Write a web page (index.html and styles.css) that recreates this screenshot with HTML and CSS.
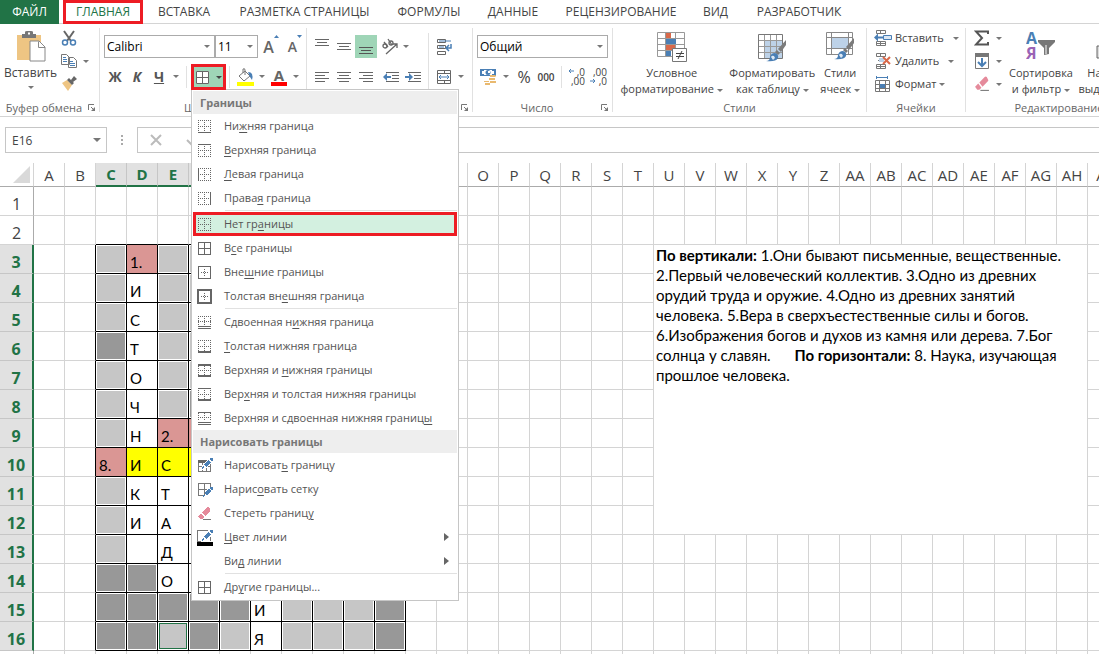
FILE: index.html
```html
<!DOCTYPE html>
<html lang="ru">
<head>
<meta charset="utf-8">
<title>Кроссворд</title>
<link rel="stylesheet" href="styles.css">
</head>
<body>
<svg class="defs" aria-hidden="true">
  <symbol id="dots" viewBox="0 0 15 15"><path d="M1 1.5h13M1 7.5h13M1 13.5h13M1.500 1v13M7.500 1v13M13.500 1v13" fill="none" stroke="#666" stroke-dasharray="1 1"/></symbol>
  <symbol id="grid4" viewBox="0 0 15 15"><path d="M1.500 1.500h12v12h-12zM7.500 1.500v12M1.500 7.500h12" fill="none" stroke="#666"/></symbol>
  <symbol id="inner" viewBox="0 0 15 15"><path d="M4 7.500h8M7.500 4v8" fill="none" stroke="#666" stroke-dasharray="1 1"/></symbol>
  <symbol id="pencil" viewBox="0 0 12 12"><path d="M0 12l1-4 2 3zM2 7l5-5 3 3-5 5zM8 1l1-1h2l1 1v2l-1 1z" fill="#4a7fb5"/></symbol>
  <symbol id="eraser" viewBox="0 0 15 15"><path d="M5 6l5-5q1-1 2 0l1 2q1 1 0 2l-5 5z" fill="#e58a9b"/><path d="M4 7l3 4-2 2H3L1 10z" fill="#e58a9b"/><path d="M6 13.500h8" stroke="#777"/></symbol>
  <symbol id="brush" viewBox="0 0 20 22"><path d="M20 0v5l-5 7-3-3z" fill="#7b7b7b"/><path d="M11 10l3 3-2 2-3-3z" fill="#7b7b7b"/><path d="M0 21q4 0 4-4 1-4 5-4 4 1 3 5-2 4-12 3z" fill="#4a7fb5"/><path d="M5 17q1-2 3-1l1 2-2 2z" fill="#dce8f4"/></symbol>
  <symbol id="launch" viewBox="0 0 8 8"><path d="M.5 6V.5H6M3 3l3 3" fill="none" stroke="#777"/><path d="M7 3v4H3z" fill="#777"/></symbol>
</svg>
<div class="app">
  <nav class="tabs">
    <button class="tab file">ФАЙЛ</button>
    <button class="tab active">ГЛАВНАЯ</button>
    <button class="tab">ВСТАВКА</button>
    <button class="tab">РАЗМЕТКА СТРАНИЦЫ</button>
    <button class="tab">ФОРМУЛЫ</button>
    <button class="tab">ДАННЫЕ</button>
    <button class="tab">РЕЦЕНЗИРОВАНИЕ</button>
    <button class="tab">ВИД</button>
    <button class="tab">РАЗРАБОТЧИК</button>
  </nav>

  <div class="ribbon">
    <section class="group clipboard">
      <div class="body">
        <button class="big paste">
          <svg width="30" height="32" viewBox="0 0 30 32"><path d="M1 4h24v25H1z" fill="#eec583"/><path d="M6 3h3V1q0-1 2-1h4q2 0 2 1v2h3v4H6z" fill="#777"/><path d="M12 1.500h2v2h-2z" fill="#fff"/><path d="M14 10h9l6 6v14H14z" fill="#fff" stroke="#888"/><path d="M22.500 10.500v6H29" fill="none" stroke="#888"/></svg>
          <span>Вставить</span><i class="caret"></i>
        </button>
        <div class="stack">
          <button class="tool" aria-label="Вырезать"><svg width="16" height="16" viewBox="0 0 16 16"><path d="M3 1l7 10M13 1L6 11" stroke="#666" stroke-width="2"/><circle cx="4" cy="12.500" r="2.500" fill="none" stroke="#4a7fb5" stroke-width="1.500"/><circle cx="12" cy="12.500" r="2.500" fill="none" stroke="#4a7fb5" stroke-width="1.500"/></svg></button>
          <button class="tool wide" aria-label="Копировать"><svg width="16" height="16" viewBox="0 0 16 16"><path d="M.5 1.500h5l3 3v7h-8zM7.500 4.500h5l3 3v7h-8z" fill="#fff" stroke="#777"/><path d="M2 4.500h3M2 6.500h4M2 8.500h4M9 8.500h3M9 10.500h5M9 12.500h5" stroke="#4a7fb5"/></svg><i class="caret"></i></button>
          <button class="tool" aria-label="Формат по образцу"><svg width="16" height="16" viewBox="0 0 16 16"><path d="M1 7l5-3 5 5-4 6z" fill="#eec583"/><path d="M6 4l2-2 5 5-2 2zM10 4l3-4 3 3-4 3z" fill="#666"/></svg></button>
        </div>
      </div>
      <footer><span>Буфер обмена</span><svg class="launch"><use href="#launch"/></svg></footer>
    </section>

    <section class="group font">
      <div class="body rows">
        <div class="row">
          <label class="combo name"><select aria-label="Шрифт"><option>Calibri</option></select></label>
          <label class="combo size"><select aria-label="Размер"><option>11</option></select></label>
          <button class="cell letter" aria-label="Увеличить размер">A<svg width="5" height="3"><path d="M0 3l2.500-3L5 3z" fill="#4a7fb5"/></svg></button>
          <button class="cell letter small" aria-label="Уменьшить размер">A<svg width="5" height="3"><path d="M0 0h5L2.500 3z" fill="#4a7fb5"/></svg></button>
        </div>
        <div class="row">
          <button class="cell style"><b>Ж</b></button>
          <button class="cell style"><b><em>К</em></b></button>
          <button class="cell style"><b><u>Ч</u></b></button>
          <button class="drop" aria-label="Подчеркивание"><i class="caret"></i></button>
          <i class="rule"></i>
          <div class="borders">
            <button class="borders-btn" aria-label="Границы"><svg width="15" height="15"><path d="M1 1h13v13H1z" fill="#fff"/><use href="#grid4"/></svg><i class="caret"></i></button>
            <div class="menu">
              <h3>Границы</h3>
              <button><svg><use href="#dots"/><path d="M1 13.500h13" stroke="#666"/></svg><span>Ни<u>ж</u>няя граница</span></button>
              <button><svg><use href="#dots"/><path d="M1 1.500h13" stroke="#666"/></svg><span><u>В</u>ерхняя граница</span></button>
              <button><svg><use href="#dots"/><path d="M1.500 1v13" stroke="#666"/></svg><span><u>Л</u>евая граница</span></button>
              <button><svg><use href="#dots"/><path d="M13.500 1v13" stroke="#666"/></svg><span>Права<u>я</u> граница</span></button>
              <hr>
              <button class="marked"><svg><use href="#dots"/></svg><span>Нет гр<u>а</u>ницы</span></button>
              <button><svg><use href="#grid4"/></svg><span>В<u>с</u>е границы</span></button>
              <button><svg><use href="#inner"/><path d="M1.500 1.500h12v12h-12z" fill="none" stroke="#666"/></svg><span>Вне<u>ш</u>ние границы</span></button>
              <button><svg><use href="#inner"/><path d="M1 1h13v13H1z" fill="none" stroke="#666" stroke-width="2"/></svg><span>Толстая вн<u>е</u>шняя граница</span></button>
              <hr>
              <button><svg><path d="M1 1.500h13M1 6.500h13M1.500 1v9M7.500 1v9M13.500 1v9" stroke="#666" stroke-dasharray="1 1"/><path d="M1 11.500h13M1 13.500h13" stroke="#666"/></svg><span>Сдвоенная н<u>и</u>жняя граница</span></button>
              <button><svg><use href="#dots"/><path d="M1 13h13" stroke="#666" stroke-width="2"/></svg><span><u>Т</u>олстая нижняя граница</span></button>
              <button><svg><use href="#dots"/><path d="M1 2h13M1 13h13" stroke="#666" stroke-width="2"/></svg><span>Верхняя и <u>н</u>ижняя границы</span></button>
              <button><svg><use href="#dots"/><path d="M1 1.500h13" stroke="#666"/><path d="M1 13h13" stroke="#666" stroke-width="2"/></svg><span>Вер<u>х</u>няя и толстая нижняя границы</span></button>
              <button><svg><path d="M1 6.500h13M1.500 2v8M7.500 2v8M13.500 2v8" stroke="#666" stroke-dasharray="1 1"/><path d="M1 1.500h13M1 11.500h13M1 13.500h13" stroke="#666"/></svg><span>Верхняя и сдвоенная нижняя границ<u>ы</u></span></button>
              <h3>Нарисовать границы</h3>
              <button><svg><path d="M1.500 2.500h12v11h-12zM5.500 3v10M9.500 3v10M2 8.500h11" fill="none" stroke="#777"/><path d="M1 2h10v3H1z" fill="#666"/><path d="M4 12l1-4 6-7h4v3l-7 7z" fill="#fff"/><use href="#pencil" x="5" y="0" width="11" height="11"/></svg><span>Нарисоват<u>ь</u> границу</span></button>
              <button><svg><path d="M8 13.500H1.500v-12h12V6M7.500 2v11M2 7.500h8" fill="none" stroke="#777"/><use href="#pencil" x="6" y="5" width="10" height="10"/></svg><span>Нарис<u>о</u>вать сетку</span></button>
              <button><svg><use href="#eraser"/></svg><span>Стереть границ<u>у</u></span></button>
              <button><svg class="tall"><path d="M11 1.500H.5v11H4M13 8v4" fill="none" stroke="#777"/><use href="#pencil" x="5" y="1" width="11" height="11"/><path d="M0 13h16v4H0z"/></svg><span><u>Ц</u>вет линии</span><i class="sub"></i></button>
              <button><svg></svg><span>Ви<u>д</u> линии</span><i class="sub"></i></button>
              <hr>
              <button><svg><use href="#grid4"/></svg><span>Др<u>у</u>гие границы...</span></button>
            </div>
          </div>
          <i class="rule"></i>
          <button class="cell" aria-label="Цвет заливки"><svg width="17" height="18" viewBox="0 0 17 18"><path d="M2 8l6-5 5 5-6 5zM6 5V1q2-1 2 1v5" fill="none" stroke="#777"/><path d="M11 4q6 0 4 8l-2-3z" fill="#4a7fb5"/><path d="M0 14h17v4H0z" fill="#ff0"/></svg></button>
          <button class="drop" aria-label="Цвета заливки"><i class="caret"></i></button>
          <button class="cell" aria-label="Цвет текста"><span class="font-color">A</span></button>
          <button class="drop" aria-label="Цвета текста"><i class="caret"></i></button>
        </div>
      </div>
      <footer><span>Шрифт</span></footer>
    </section>

    <section class="group align">
      <div class="body">
        <div class="rows">
          <div class="row">
            <button class="cell" aria-label="По верхнему краю"><svg width="16" height="16"><path d="M1 .5h14M3 3.500h10M1 6.500h14" stroke="#666"/></svg></button>
            <button class="cell" aria-label="По середине"><svg width="16" height="16"><path d="M1 4.500h14M3 7.500h10M1 10.500h14" stroke="#666"/></svg></button>
            <button class="cell on" aria-label="По нижнему краю"><svg width="16" height="16"><path d="M1 8.500h14M3 11.500h10M1 14.500h14" stroke="#555"/></svg></button>
            <button class="cell orient" aria-label="Ориентация"><svg width="18" height="18" viewBox="0 0 18 18"><g fill="none" stroke="#666" stroke-width="1.300"><circle cx="4" cy="8" r="2"/><path d="M3 4l4 5M7 1l4 6"/><circle cx="10" cy="5" r="2"/><path d="M5 16L16 6M12 6h4v4"/></g></svg><i class="caret"></i></button>
          </div>
          <div class="row">
            <button class="cell" aria-label="По левому краю"><svg width="16" height="16"><path d="M1 3.500h14M1 6.500h10M1 9.500h14M1 12.500h10" stroke="#666"/></svg></button>
            <button class="cell" aria-label="По центру"><svg width="16" height="16"><path d="M1 3.500h14M3 6.500h10M1 9.500h14M3 12.500h10" stroke="#666"/></svg></button>
            <button class="cell" aria-label="По правому краю"><svg width="16" height="16"><path d="M1 3.500h14M5 6.500h10M1 9.500h14M5 12.500h10" stroke="#666"/></svg></button>
            <button class="cell indent" aria-label="Уменьшить отступ"><svg width="17" height="16"><path d="M3 3.500h13M9 6.500h7M9 9.500h7M3 12.500h13" stroke="#666"/><path d="M0 8l4-4v3h4v2H4v3z" fill="#4a7fb5"/></svg></button>
            <button class="cell" aria-label="Увеличить отступ"><svg width="17" height="16"><path d="M3 3.500h13M9 6.500h7M9 9.500h7M3 12.500h13" stroke="#666"/><path d="M8 8L4 4v3H0v2h4v3z" fill="#4a7fb5"/></svg></button>
          </div>
        </div>
        <i class="rule full"></i>
        <div class="rows">
          <div class="row"><button class="cell" aria-label="Перенести текст"><svg width="17" height="16"><path d="M1.500.5h8v3h-8zM1.500 6.500h8v3h-8zM1.500 12.500h8v3h-8z" fill="none" stroke="#666"/><path d="M3 2h12M3 8h5" stroke="#4a7fb5"/><path d="M15 5v4h-4M13 6l-3 3 3 3" fill="none" stroke="#4a7fb5" stroke-width="1.500"/></svg></button></div>
          <div class="row"><button class="cell" aria-label="Объединить"><svg width="16" height="16"><path d="M1.500 1.500h13v13h-13zM1 4.500h14M1 11.500h14M8.500 1v3M8.500 12v3" fill="none" stroke="#666"/><path d="M3 8h10M5 6L3 8l2 2M11 6l2 2-2 2" fill="none" stroke="#4a7fb5"/></svg></button><button class="drop" aria-label="Варианты объединения"><i class="caret"></i></button></div>
        </div>
      </div>
      <footer><span>Выравнивание</span><svg class="launch"><use href="#launch"/></svg></footer>
    </section>

    <section class="group number">
      <div class="body rows">
        <div class="row"><label class="combo format"><select aria-label="Числовой формат"><option>Общий</option></select></label></div>
        <div class="row">
          <button class="cell" aria-label="Финансовый формат"><svg width="16" height="16" viewBox="0 0 16 16"><path d="M.5.5h15v6h-15z" fill="#fff" stroke="#4a7fb5"/><path d="M0 0h4v2H2v3h2v2H0zM12 0h4v7h-4V5h2V2h-2z" fill="#4a7fb5"/><circle cx="8" cy="3.500" r="2.500" fill="#4a7fb5"/><path d="M8 2h2v2H8z" fill="#fff"/><path d="M10 6h5q2 1 0 2h-5zM9 9h6v2H9zM4 12h5v1H4zM10 12h6v2h-6zM5 14h5v2H5z" fill="#e9b96f"/></svg></button>
          <button class="drop money" aria-label="Валюты"><i class="caret"></i></button>
          <button class="cell percent">%</button>
          <button class="cell thousands">000</button>
          <i class="rule"></i>
          <button class="cell decimal" aria-label="Увеличить разрядность"><span>,0</span><span>,00</span><svg width="6" height="6"><path d="M6 3H1M3 1L1 3l2 2" fill="none" stroke="#4a7fb5"/></svg></button>
          <button class="cell decimal less" aria-label="Уменьшить разрядность"><span>,00</span><span>,0</span><svg width="6" height="6"><path d="M0 3h5M3 1l2 2-2 2" fill="none" stroke="#4a7fb5"/></svg></button>
        </div>
      </div>
      <footer><span>Число</span><svg class="launch"><use href="#launch"/></svg></footer>
    </section>

    <section class="group styles">
      <div class="body">
        <button class="big cond"><svg width="30" height="32" viewBox="0 0 30 32"><path d="M.5 1.500h27v24H.5zM8.500 1v25M18.500 1v25M0 7.500h28M0 13.500h28M0 19.500h28" fill="#fff" stroke="#999"/><path d="M9 2h5v5H9zM9 14h9v5H9z" fill="#d9694a"/><path d="M9 8h10v5H9zM9 20h5v5H9z" fill="#4a7fb5"/><path d="M15.500 17.500h14v13h-14z" fill="#fff" stroke="#777"/><path d="M19 22.500h8M19 25.500h8M25 20l-4 8" stroke="#444"/></svg><span>Условное<br>форматирование <i class="caret"></i></span></button>
        <button class="big as-table"><svg width="30" height="32" viewBox="0 0 30 32"><path d="M1.500 3.500h24v24h-24z" fill="#fff" stroke="#777"/><path d="M7 9h18v18H7z" fill="#bdd2e8"/><path d="M7.500 4v23M13.500 4v23M19.500 4v23M2 9.500h23M2 15.500h23M2 21.500h23" stroke="#999"/><use href="#brush" x="8" y="9" width="22" height="22"/></svg><span>Форматировать<br>как таблицу <i class="caret"></i></span></button>
        <button class="big cell-styles"><svg width="30" height="32" viewBox="0 0 30 32"><path d="M1.500 1.500h26v22h-26zM6.500 2v21M23.500 2v21M2 6.500h25M2 17.500h25" fill="#fff" stroke="#888"/><path d="M7 7h16v10H7z" fill="#bdd2e8"/><use href="#brush" x="8" y="7" width="22" height="22"/></svg><span>Стили<br>ячеек <i class="caret"></i></span></button>
      </div>
      <footer><span>Стили</span></footer>
    </section>

    <section class="group cells">
      <div class="body list">
        <button><svg width="18" height="16"><path d="M2.500.5h9v3h-9zM6.500.5v3M2.500 11.500h9v4h-9zM2 13.500h9M6.500 11v4" fill="none" stroke="#777"/><path d="M9.500 5.500h8v4h-8z" fill="#dce8f4" stroke="#4a7fb5"/><path d="M0 7.500l4-4v3h5v2H4v3z" fill="#4a7fb5"/></svg><span>Вставить</span><i class="caret far"></i></button>
        <button><svg width="18" height="16"><path d="M2.500.5h9v3h-9zM6.500.5v3M2.500 11.500h9v4h-9zM2 13.500h9M6.500 11v4M4 7.500h3" fill="none" stroke="#777"/><path d="M5 5h5v4H5z" fill="#bdd2e8"/><path d="M9 4l7 7M16 4l-7 7" stroke="#d9694a" stroke-width="2"/></svg><span>Удалить</span><i class="caret far"></i></button>
        <button><svg width="18" height="16"><path d="M2 1.500h12M2.500 0v3M13.500 0v3" stroke="#4a7fb5"/><path d="M1.500 4.500h14v11h-14zM5.500 4v11M11.500 4v11M1 8.500h14M1 12.500h14" fill="none" stroke="#777"/><path d="M6 8h5v4H6z" fill="#4a7fb5"/></svg><span>Формат</span><i class="caret"></i></button>
      </div>
      <footer><span>Ячейки</span></footer>
    </section>

    <section class="group edit">
      <div class="body">
        <div class="stack">
          <button class="tool wide" aria-label="Сумма"><svg width="16" height="16"><path d="M14 4V1.500H2L8 8l-6 6.500h12V12" fill="none" stroke="#555" stroke-width="2"/></svg><i class="caret"></i></button>
          <button class="tool wide" aria-label="Заполнить"><svg width="16" height="16"><path d="M1.500.5h13v15h-13z" fill="#fff" stroke="#777"/><path d="M1 0h14v4H1z" fill="#777"/><path d="M8 5v8M4 9l4 4 4-4" fill="none" stroke="#4a7fb5" stroke-width="2"/></svg><i class="caret"></i></button>
          <button class="tool wide" aria-label="Очистить"><svg width="16" height="16"><use href="#eraser"/></svg><i class="caret"></i></button>
        </div>
        <button class="big sort"><svg width="30" height="32" viewBox="0 0 30 32"><text x="0" y="13" class="sort-a">А</text><text x="0" y="28" class="sort-z">Я</text><path d="M12 9h17v2l-6 6v6l-5 1v-7l-6-6z" fill="#777"/><path d="M20 14v9" stroke="#fff"/></svg><span>Сортировка<br>и фильтр <i class="caret"></i></span></button>
        <button class="big find"><svg width="30" height="32" viewBox="0 0 30 32"><path d="M3 15h8v12H3zM6 10h5v5H6zM18 15h8v12h-8zM18 10h5v5h-5zM11 16h7v6h-7z" fill="#ddd" stroke="#666"/></svg><span>Найти и<br>выделить <i class="caret"></i></span></button>
      </div>
      <footer><span>Редактирование</span></footer>
    </section>
  </div>

  <div class="formula">
    <label class="namebox"><input value="E16" aria-label="Имя"></label>
    <i class="grip"></i>
    <div class="entry">
      <button aria-label="Отмена"><svg width="12" height="12"><path d="M1 1l10 10M11 1L1 11" stroke="#bbb" stroke-width="2"/></svg></button>
      <button aria-label="Ввод"><svg width="14" height="12"><path d="M1 6l4 4 8-9" fill="none" stroke="#bbb" stroke-width="2"/></svg></button>
      <input aria-label="Строка формул">
    </div>
  </div>

  <div class="sheet"><table id="grid"></table></div>
</div>
<script src="sheet.js"></script>
</body>
</html>
```

FILE: styles.css
```css
* { box-sizing: border-box; }
body { margin: 0; background: #fff; color: #444; font: 12px/16px "Open Sans", "Noto Sans", sans-serif; overflow: hidden; }
button, select, input { font: inherit; color: inherit; margin: 0; padding: 0; border: 0; background: none; border-radius: 0; }
svg { display: block; flex: none; }
.defs { position: absolute; width: 0; height: 0; }
.app { display: flex; flex-direction: column; height: 100vh; overflow: hidden; }

.tabs { flex: none; display: grid; grid-template-columns: 59px 88px 74px 167px 82px 86px 130px 59px 108px; height: 24px; border-bottom: 1px solid #d4d4d4; }
.tab { white-space: nowrap; height: 23px; }
.file { height: 24px; background: #217346; color: #fff; }
.active { color: #217346; border: 3px solid #ed1c24; margin: 0 4px; height: 24px; }

.ribbon { flex: none; display: flex; height: 93px; border-bottom: 1px solid #d4d4d4; padding-top: 4px; font-size: 11px; }
.group { flex: none; display: flex; flex-direction: column; border-right: 1px solid #e1e1e1; height: 84px; }
.body { flex: none; display: flex; height: 72px; }
.group footer { flex: none; display: flex; align-items: center; height: 16px; color: #666; white-space: nowrap; }
.group footer span { flex: 1; text-align: center; }
.launch { width: 8px; height: 8px; margin-right: 3px; }
.clipboard { width: 100px; }
.font { width: 207px; }
.align { width: 166px; }
.number { width: 140px; }
.styles { width: 254px; }
.cells { width: 99px; }
.edit { width: 186px; border: 0; }

.caret { display: inline-block; flex: none; width: 0; height: 0; border: 3px solid transparent; border-top-color: #777; border-bottom: 0; vertical-align: middle; }
.rule { width: 1px; height: 22px; background: #e1e1e1; margin: 0 4px; }
.rule.full { height: 60px; margin: 5px 4px 0; }
.body.rows, .rows { display: flex; flex-direction: column; gap: 7px; padding-top: 7px; }
.row { flex: none; display: flex; height: 23px; align-items: center; }
.font .body, .number .body { padding-left: 4px; }
.align .body { padding-left: 4px; }

.big { display: flex; flex-direction: column; align-items: center; white-space: nowrap; padding-top: 3px; }
.big > svg { margin-bottom: 2px; }
.paste { width: 61px; font-size: 12px; }
.paste .caret { margin-top: 5px; }
.stack { display: flex; flex-direction: column; gap: 7px; padding-top: 2px; }
.tool { display: flex; align-items: center; width: 30px; height: 16px; gap: 6px; }

.combo { position: relative; display: block; height: 23px; font-size: 12px; }
.combo select { appearance: none; width: 100%; height: 23px; border: 1px solid #ababab; background: #fff; color: #000; padding: 0 2px; }
.combo::after, .namebox::after { content: ""; position: absolute; right: 5px; top: 10px; border: 3px solid transparent; border-top-color: #777; border-bottom: 0; }
.name { width: 111px; }
.size { width: 43px; }
.format { width: 131px; }
.cell { display: flex; align-items: center; justify-content: center; width: 22px; height: 23px; }
.drop { display: flex; align-items: center; justify-content: center; width: 12px; height: 23px; }
.on { background: #9fd5b7; }
.letter { font-size: 16px; font-weight: 600; color: #666; align-items: flex-start; line-height: 24px; margin-left: 2px; }
.small { font-size: 14px; }
.style { font-size: 14px; color: #555; }
.borders { position: relative; width: 34px; height: 25px; }
.borders-btn { position: relative; z-index: 3; display: flex; align-items: center; gap: 6px; width: 35px; height: 26px; padding: 0 0 0 1px; border: 3px solid #ed1c24; background: #9fd5b7; }
.borders-btn .caret { border-top-color: #444; }
.font-color { width: 16px; height: 18px; line-height: 15px; font-size: 15px; font-weight: 700; color: #666; border-bottom: 4px solid #f00; text-align: center; }
.orient { width: 36px; gap: 4px; }
.indent { margin-left: 3px; }
.money { width: 14px; }
.percent { font-size: 16px; }
.thousands { font-size: 10px; font-weight: 600; }
.decimal { position: relative; flex-direction: column; align-items: flex-end; font-size: 10px; line-height: 9px; padding-right: 3px; }
.decimal svg { position: absolute; left: 2px; top: 3px; }
.decimal.less svg { top: 13px; }

.cond { width: 118px; }
.as-table { width: 84px; }
.cell-styles { width: 52px; }
.cond, .as-table, .cell-styles, .sort, .find, .list { font-size: 12px; }
.styles .big, .list { font-size: 11px; }
.sort, .find { font-size: 11px; }
.list { flex-direction: column; gap: 7px; padding: 2px 0 0 7px; }
.list button { display: flex; align-items: center; height: 16px; gap: 3px; }
.list .far { margin-left: 6px; }
.edit .stack { padding-left: 8px; width: 40px; }
.sort { width: 70px; }
.find { width: 66px; flex: none; }
.sort-a, .sort-z { font: 700 16px/16px "Open Sans", sans-serif; fill: #4a7fb5; }
.sort-z { fill: #9a63b5; }

.menu { position: absolute; z-index: 2; left: 0; top: 25px; width: 268px; padding: 1px; border: 1px solid #c6c6c6; background: #fff; color: #555; }
.menu h3 { margin: 0; padding-left: 7px; height: 23px; font: 700 11px/23px "Open Sans", sans-serif; color: #777; background: #eee; }
.menu button { display: flex; align-items: center; width: 100%; height: 24px; padding-left: 4px; text-align: left; white-space: nowrap; }
.menu svg { width: 15px; height: 15px; margin-right: 12px; overflow: visible; shape-rendering: crispEdges; }
.menu svg.tall { height: 17px; }
.menu hr { margin: 0 0 1px 32px; border: 0; height: 1px; background: #e1e1e1; }
.menu button.marked { background: #d3f0e0; border: 3px solid #ed1c24; padding-left: 1px; }
.menu u { text-underline-offset: 2px; }
.sub { margin: 0 8px 0 auto; border: 4px solid transparent; border-left: 5px solid #666; border-right: 0; }

.formula { flex: none; display: flex; align-items: flex-start; height: 46px; padding: 10px 0 0 5px; }
.namebox { position: relative; width: 102px; height: 26px; border: 1px solid #c6c6c6; }
.namebox input { width: 80px; height: 24px; padding-left: 6px; }
.namebox::after { border-width: 4px; border-bottom: 0; }
.grip { width: 2px; height: 10px; margin: 8px 14px; background: repeating-linear-gradient(#aaa 0 2px, transparent 2px 4px); }
.entry { flex: 1; display: flex; align-items: center; gap: 24px; height: 26px; padding-left: 12px; border: 1px solid #c6c6c6; border-right: 0; }
.entry input { flex: 1; }

.sheet { flex: 1; overflow: hidden; font: 15px/20px Lato, "Open Sans", sans-serif; color: #000; }
#grid { width: 1119px; table-layout: fixed; border-collapse: separate; border-spacing: 0; }
#grid th, #grid td { height: 29px; padding: 0 0 1px 3px; border: 0 solid #d4d4d4; border-width: 0 1px 1px 0; vertical-align: bottom; text-align: left; overflow: hidden; white-space: nowrap; }
#grid th { padding: 0; text-align: center; font: 16px/22px "Open Sans", sans-serif; color: #444; }
#grid thead th { height: 24px; border-bottom-color: #ababab; font-size: 15px; }
#grid tbody th { border-right-color: #ababab; }
#grid th.sel { background: #e1e1e1; color: #217346; font-weight: 700; border-color: #c6c6c6; }
#grid thead th.sel { border-bottom: 2px solid #217346; }
#grid tbody th.sel { border-right: 2px solid #217346; }
.corner svg { margin: 0 3px 3px auto; }
#grid td.edge-r { border-right-color: #000; }
#grid td.edge-b { border-bottom-color: #000; }
#grid td.box { border-color: #000; }
#grid td.light { background: #c6c6c6; box-shadow: inset 0 0 0 1px #fff; }
#grid td.dark { background: #989898; box-shadow: inset 0 0 0 1px #fff; }
#grid td.pink { background: #da9694; }
#grid td.yellow { background: #ff0; }
#grid td.current { box-shadow: inset 0 0 0 1px #fff, inset 0 0 0 2px #217346; }
#grid td.clues { vertical-align: top; white-space: pre-line; padding: 0 2px; }
#grid td.clues .gap { margin-left: 20px; }
```

FILE: sheet.js
```js
// One string per crossword row, columns C to L:
// l = light, d = dark, p = pink, y = yellow, w = white
const fills = {
  3: "lpllllllll", 4: "lwllllllll", 5: "lwllllllll", 6: "dwllllllll",
  7: "lwllllllll", 8: "lwldllllll", 9: "lwppllllll", 10: "pyyyyyyyyy",
  11: "lwwwllllll", 12: "lwwwllllll", 13: "lwwwllllll", 14: "ddwwllllll",
  15: "dddddwllld", 16: "ddldlwllld"
};
const texts = {
  D3: "1.", D4: "И", D5: "С", D6: "Т", D7: "О", D8: "Ч", D9: "Н", D10: "И", D11: "К", D12: "И",
  E9: "2.", C10: "8.", E10: "С", E11: "Т", E12: "А", E13: "Д", E14: "О", H15: "И", H16: "Я"
};
const kinds = { l: "light", d: "dark", p: "pink", y: "yellow", w: "white" };
const clues = "<b>По вертикали:</b> 1.Они бывают письменные, вещественные.\n" +
  "2.Первый человеческий коллектив. 3.Одно из древних\n" +
  "орудий труда и оружие. 4.Одно из древних занятий\n" +
  "человека. 5.Вера в сверхъестественные силы и богов.\n" +
  "6.Изображения богов и духов из камня или дерева. 7.Бог\n" +
  "солнца у славян. <b class=\"gap\">По горизонтали:</b> 8. Наука, изучающая\n" +
  "прошлое человека.";

const letters = [];
for (let i = 0; i < 35; i++) {
  letters.push((i > 25 ? "A" : "") + String.fromCharCode(65 + i % 26));
}
let html = '<colgroup><col style="width:34px">' + '<col style="width:31px">'.repeat(35) + "</colgroup>";
html += '<thead><tr><th class="corner"><svg width="17" height="17"><path d="M17 0v17H0z" fill="#d9d9d9"/></svg></th>';
letters.forEach((name, c) => {
  html += `<th class="${c > 1 && c < 12 ? "sel" : ""}">${name}</th>`;
});
html += "</tr></thead><tbody>";
for (let r = 1; r <= 17; r++) {
  html += `<tr><th class="${r > 2 && r < 17 ? "sel" : ""}">${r}</th>`;
  letters.forEach((name, c) => {
    const inClues = r > 2 && r < 13 && c > 19 && c < 34;
    if (inClues) {
      if (r === 3 && c === 20) html += `<td class="clues" colspan="14" rowspan="10">${clues}</td>`;
      return;
    }
    const cls = [];
    if (fills[r] && c > 1 && c < 12) cls.push("box", kinds[fills[r][c - 2]]);
    if (fills[r] && c === 1) cls.push("edge-r");
    if (r === 2 && c > 1 && c < 12) cls.push("edge-b");
    if (name + r === "E16") cls.push("current");
    html += `<td class="${cls.join(" ")}">${texts[name + r] || ""}</td>`;
  });
  html += "</tr>";
}
document.getElementById("grid").innerHTML = html + "</tbody>";
```
